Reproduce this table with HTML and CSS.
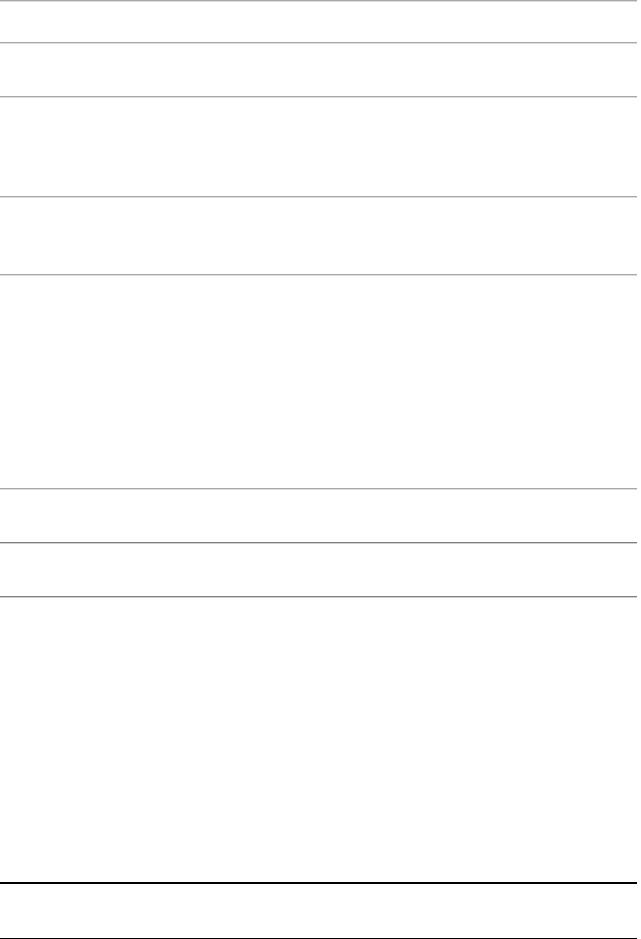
FILE: index.html
```html
<!DOCTYPE html>
<html>
<head>
<meta charset="utf-8">
<link rel="stylesheet" href="styles.css">
</head>
<body>
<div class="page">
  <div class="rule light"></div>
  <div class="gap g40"></div>
  <div class="rule light"></div>
  <div class="gap g52"></div>
  <div class="rule light"></div>
  <div class="gap g98"></div>
  <div class="rule light"></div>
  <div class="gap g76"></div>
  <div class="rule light"></div>
  <div class="gap g212"></div>
  <div class="rule light"></div>
  <div class="gap g52"></div>
  <div class="rule mid"></div>
  <div class="gap g52"></div>
  <div class="rule mid"></div>
  <div class="gap g284"></div>
  <div class="rule dark"></div>
  <div class="gap g54"></div>
  <div class="rule dark"></div>
</div>
</body>
</html>
```
FILE: styles.css
```css
html, body {
  margin: 0;
  padding: 0;
  background: #ffffff;
}
.page {
  width: 637px;
  display: flex;
  flex-direction: column;
}
.rule {
  height: 0;
  border-top: 1px solid #a8a8a8;
  border-bottom: 1px solid #dcdcdc;
}
.rule.mid {
  border-top-color: #808080;
  border-bottom-color: #d0d0d0;
}
.rule.dark {
  border-top-color: #000000;
  border-bottom-color: #000000;
}
.g40 { height: 40px; }
.g52 { height: 52px; }
.g54 { height: 54px; }
.g76 { height: 76px; }
.g98 { height: 98px; }
.g212 { height: 212px; }
.g284 { height: 284px; }
```
